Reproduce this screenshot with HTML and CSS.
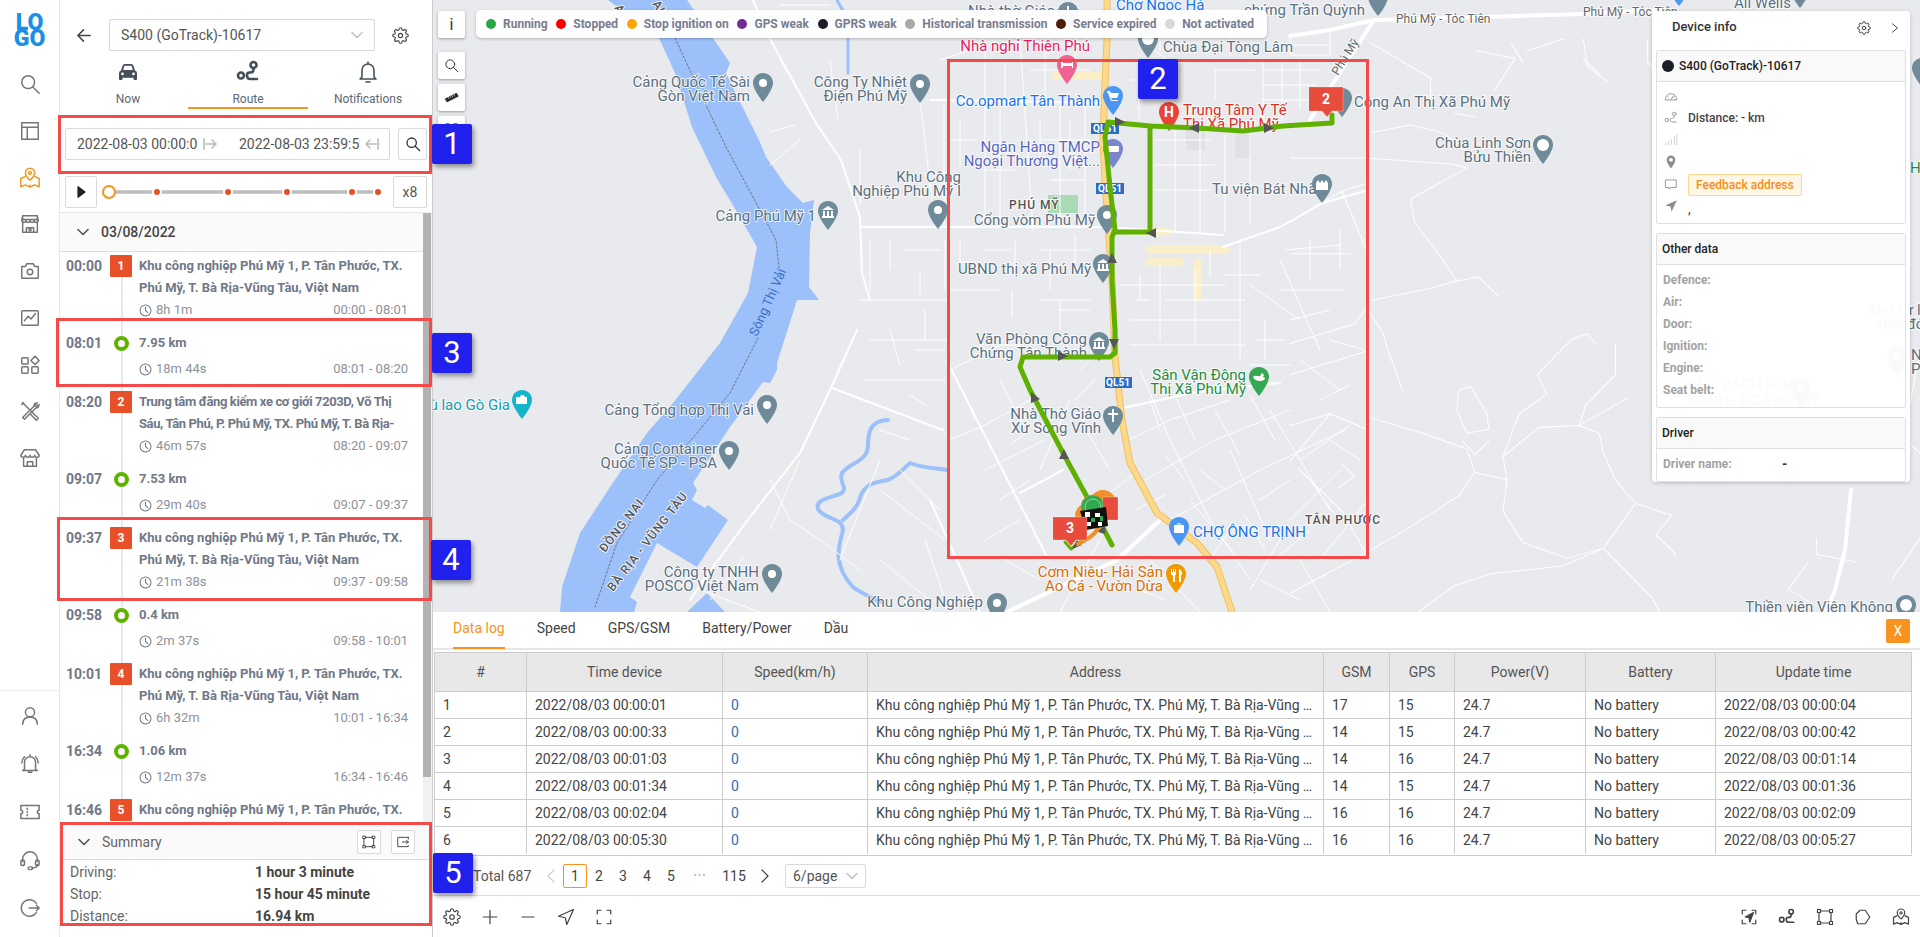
FILE: index.html
```html
<!DOCTYPE html>
<html lang="en">
<head>
    <meta charset="UTF-8">
    <title>Route</title>
    <link rel="stylesheet" href="styles.css">
</head>
<body>
    <svg class="defs">
        <symbol id="i-gear" viewBox="0 0 24 24"><circle cx="12" cy="12" r="3"/><path d="M19.4 15a1.65 1.65 0 0 0 .33 1.82l.06.06a2 2 0 0 1 0 2.83 2 2 0 0 1-2.83 0l-.06-.06a1.65 1.65 0 0 0-1.82-.33 1.65 1.65 0 0 0-1 1.51V21a2 2 0 0 1-2 2 2 2 0 0 1-2-2v-.09A1.65 1.65 0 0 0 9 19.4a1.65 1.65 0 0 0-1.82.33l-.06.06a2 2 0 0 1-2.83 0 2 2 0 0 1 0-2.83l.06-.06a1.65 1.65 0 0 0 .33-1.82 1.65 1.65 0 0 0-1.51-1H3a2 2 0 0 1-2-2 2 2 0 0 1 2-2h.09A1.65 1.65 0 0 0 4.6 9a1.65 1.65 0 0 0-.33-1.82l-.06-.06a2 2 0 0 1 0-2.83 2 2 0 0 1 2.83 0l.06.06a1.65 1.65 0 0 0 1.82.33H9a1.65 1.65 0 0 0 1-1.51V3a2 2 0 0 1 2-2 2 2 0 0 1 2 2v.09a1.65 1.65 0 0 0 1 1.51 1.65 1.65 0 0 0 1.82-.33l.06-.06a2 2 0 0 1 2.83 0 2 2 0 0 1 0 2.83l-.06.06a1.65 1.65 0 0 0-.33 1.82V9a1.65 1.65 0 0 0 1.51 1H21a2 2 0 0 1 2 2 2 2 0 0 1-2 2h-.09a1.65 1.65 0 0 0-1.51 1z"/></symbol>
        <symbol id="i-route" viewBox="0 0 24 24"><circle cx="17.5" cy="5" r="3"/><circle cx="5" cy="15.5" r="3"/><path d="M17.5 8v1.5c0 2-1 3-3 3h-1c-2 0-2.5 1.3-2.5 2.7 0 2 1 3.8 3 3.8h7"/></symbol>
        <symbol id="i-search" viewBox="0 0 24 24"><circle cx="10" cy="10" r="7"/><path d="M15.2 15.2L22 22"/></symbol>
        <symbol id="i-box" viewBox="0 0 24 24"><rect x="4" y="4" width="16" height="16"/><rect x="2" y="2" width="4" height="4" class="solid"/><rect x="18" y="2" width="4" height="4" class="solid"/><rect x="2" y="18" width="4" height="4" class="solid"/><rect x="18" y="18" width="4" height="4" class="solid"/></symbol>
        <symbol id="i-nav" viewBox="0 0 24 24"><path d="M22 2L2 11l9 2 2 9z"/></symbol>
        <symbol id="i-clock" viewBox="0 0 14 14"><circle cx="7" cy="7" r="5.9"/><path d="M7 3.2V7l2.6 2.2"/></symbol>
        <symbol id="i-chev" viewBox="0 0 12 12"><path d="M1 3.5l5 5 5-5"/></symbol>
        <symbol id="i-map" viewBox="0 0 24 24"><path d="M12 14.5s-5-4.500-5-8.200a5 5 0 0 1 10 0c0 3.700-5 8.200-5 8.200z"/><circle cx="12" cy="6.500" r="1.500"/><path d="M6.500 10.500L2 12.500v9l5-2 5 2.500 5-2.500 5 2v-9l-4.500-2M12 21.500v-2"/></symbol>
        <symbol id="pin" viewBox="0 0 20 29"><path d="M10 0C4.500 0 0 4.400 0 9.800c0 7.200 10 19.200 10 19.200s10-12 10-19.200C20 4.400 15.500 0 10 0z"/></symbol>
    </svg>

    <nav class="rail">
        <div class="logo">LO<br>GO</div>
        <div class="rail-top">
            <svg class="rail-icon" viewBox="0 0 24 24"><use href="#i-search"/></svg>
            <svg class="rail-icon" viewBox="0 0 24 24"><path d="M3 3h18v18H3zM3 8h18M9 8v13"/></svg>
            <svg class="rail-icon rail-active" viewBox="0 0 24 24"><use href="#i-map"/></svg>
            <svg class="rail-icon" viewBox="0 0 24 24"><path d="M4 3h16v18H4zM4 7h16M3 8l1-5M21 8l-1-5M3 8c0 3 4.500 3 4.500 0 0 3 4.500 3 4.500 0 0 3 4.500 3 4.500 0 0 3 4.500 3 4.500 0M8 21v-5h8v5M11 16v3h2v-3"/></svg>
            <svg class="rail-icon" viewBox="0 0 24 24"><path d="M3 7h4l1.500-3h7L17 7h4v13H3z"/><circle cx="12" cy="13" r="3"/></svg>
            <svg class="rail-icon" viewBox="0 0 24 24"><rect x="3" y="4" width="18" height="16" rx="1"/><path d="M6 15l4-5 3 3 5-6"/></svg>
            <svg class="rail-icon" viewBox="0 0 24 24"><rect x="3" y="4" width="7" height="7" rx="1"/><rect x="3" y="14" width="7" height="7" rx="1"/><rect x="14" y="14" width="7" height="7" rx="1"/><path d="M17.500 2.500l4.500 4.500-4.500 4.500L13 7z"/></svg>
            <svg class="rail-icon" viewBox="0 0 24 24"><path d="M4 3l9 9 M3 5l2-2M14 13l7 7-2 2-7-7zM20 3l-3 1-1 3-12 12 2 2 12-12 3-1 1-3-3 2-2-1z"/></svg>
            <svg class="rail-icon" viewBox="0 0 24 24"><path d="M6 3h12l4 6c0 3-5 3-5 0 0 3-5 3-5 0 0 3-5 3-5 0 0 3-5 3-5 0zM5 12v9h4v-5h6v5h4v-9M9 21h6"/></svg>
        </div>
        <div class="rail-bottom">
            <svg class="rail-icon" viewBox="0 0 24 24"><circle cx="12" cy="8" r="5"/><path d="M4 21c0-5 3-8 8-8s8 3 8 8"/></svg>
            <svg class="rail-icon" viewBox="0 0 24 24"><path d="M6 18V10a6 6 0 0 1 12 0v8l2 1H4zM10 21h4M12 2v2M3 11c0-3 1-5 3-7M21 11c0-3-1-5-3-7"/></svg>
            <svg class="rail-icon" viewBox="0 0 24 24"><path d="M2 5h20v5a2 2 0 0 0 0 4v5H2v-5a2 2 0 0 0 0-4zM9 8v1M9 11.500v1M9 15v1"/></svg>
            <svg class="rail-icon" viewBox="0 0 24 24"><path d="M4 14v-3a8 8 0 0 1 16 0v3M20 17c0 3-3 4-6 4"/><rect x="2" y="12" width="4" height="6" rx="2"/><rect x="18" y="12" width="4" height="6" rx="2"/><rect x="10" y="19.500" width="5" height="3" rx="1.500"/></svg>
            <svg class="rail-icon" viewBox="0 0 24 24"><path d="M19 7a9 9 0 1 0 0 10M11 12h11M19 9l3 3-3 3"/></svg>
        </div>
    </nav>

    <aside class="panel">
        <div class="device-row">
            <svg class="ico-back" viewBox="0 0 16 16"><path d="M15 8H2M8 2L2 8l6 6"/></svg>
            <div class="device-select">
                <span>S400 (GoTrack)-10617</span>
                <svg class="chev chev-light" viewBox="0 0 12 12"><use href="#i-chev"/></svg>
            </div>
            <svg class="ico-gear" viewBox="0 0 24 24"><use href="#i-gear"/></svg>
        </div>
        <div class="tabs">
            <div class="tab">
                <svg class="tab-icon solid-icon" viewBox="0 0 24 24"><path fill-rule="evenodd" d="M5 10.500l1.500-4.700A2.500 2.500 0 0 1 8.900 4h6.200a2.500 2.500 0 0 1 2.400 1.800l1.500 4.700c1.200.4 2 1.400 2 2.700V19a1 1 0 0 1-1 1h-1.500a1 1 0 0 1-1-1v-1.200H6.500V19a1 1 0 0 1-1 1H4a1 1 0 0 1-1-1v-5.800c0-1.300.8-2.300 2-2.700zM7.200 10h9.600l-1-3.500a1 1 0 0 0-1-.7H9.200a1 1 0 0 0-1 .7zM6.500 12.500a1.400 1.400 0 1 0 0 2.800 1.400 1.400 0 0 0 0-2.800zM17.500 12.500a1.400 1.400 0 1 0 0 2.800 1.400 1.400 0 0 0 0-2.800z"/></svg>
                <span>Now</span>
            </div>
            <div class="tab tab-active">
                <svg class="tab-icon tab-heavy" viewBox="0 0 24 24"><use href="#i-route"/></svg>
                <span>Route</span>
            </div>
            <div class="tab">
                <svg class="tab-icon tab-thin" viewBox="0 0 24 24"><path d="M6 17V10a6 6 0 0 1 12 0v7l2 2H4zM10 22h4M12 2v2"/></svg>
                <span>Notifications</span>
            </div>
        </div>

        <div class="date-row">
            <div class="date-range">
                <div class="date-part">
                    <span class="date-text">2022-08-03 00:00:00</span>
                    <svg class="date-arrow" viewBox="0 0 14 12"><path d="M1 1v10M3 6h10M9 2l4 4-4 4"/></svg>
                </div>
                <div class="date-part">
                    <span class="date-text">2022-08-03 23:59:59</span>
                    <svg class="date-arrow" viewBox="0 0 14 12"><path d="M13 1v10M11 6H1M5 2L1 6l4 4"/></svg>
                </div>
            </div>
            <div class="square-btn search-btn"><svg viewBox="0 0 24 24"><use href="#i-search"/></svg></div>
        </div>

        <div class="play-row">
            <div class="square-btn play-btn"><svg viewBox="0 0 10 14"><path d="M1 1l8 6-8 6z"/></svg></div>
            <svg class="slider" viewBox="0 0 288 18">
                <line x1="8" y1="9" x2="280" y2="9" stroke="#bdbdbd" stroke-width="3.500"/>
                <circle cx="56" cy="9" r="4" fill="#e8502a" stroke="#fff" stroke-width="2"/>
                <circle cx="127" cy="9" r="4" fill="#e8502a" stroke="#fff" stroke-width="2"/>
                <circle cx="186" cy="9" r="4" fill="#e8502a" stroke="#fff" stroke-width="2"/>
                <circle cx="251" cy="9" r="4" fill="#e8502a" stroke="#fff" stroke-width="2"/>
                <circle cx="277" cy="9" r="4" fill="#e8502a" stroke="#fff" stroke-width="2"/>
                <circle cx="8" cy="9" r="6" fill="#fff" stroke="#f7931e" stroke-width="2"/>
            </svg>
            <div class="square-btn speed-btn">x8</div>
        </div>

        <div class="stops">
            <div class="scroll-thumb"></div>
            <div class="stops-head">
                <svg class="chev" viewBox="0 0 12 12"><use href="#i-chev"/></svg>
                <b>03/08/2022</b>
            </div>

            <div class="stop">
                <div class="stop-time">00:00</div>
                <div class="stop-mark"><span class="badge">1</span></div>
                <div class="stop-body">
                    <div class="stop-addr">Khu công nghiệp Phú Mỹ 1, P. Tân Phước, TX.<br>Phú Mỹ, T. Bà Rịa-Vũng Tàu, Việt Nam</div>
                    <div class="stop-meta"><span><svg class="clock" viewBox="0 0 14 14"><use href="#i-clock"/></svg>8h 1m</span><span>00:00 - 08:01</span></div>
                </div>
            </div>
            <div class="stop stop-short">
                <div class="stop-time">08:01</div>
                <div class="stop-mark"><span class="ring"></span></div>
                <div class="stop-body">
                    <div class="stop-addr">7.95 km</div>
                    <div class="stop-meta"><span><svg class="clock" viewBox="0 0 14 14"><use href="#i-clock"/></svg>18m 44s</span><span>08:01 - 08:20</span></div>
                </div>
            </div>
            <div class="stop">
                <div class="stop-time">08:20</div>
                <div class="stop-mark"><span class="badge">2</span></div>
                <div class="stop-body">
                    <div class="stop-addr stop-addr-tight">Trung tâm đăng kiểm xe cơ giới 7203D, Võ Thị<br>Sáu, Tân Phú, P. Phú Mỹ, TX. Phú Mỹ, T. Bà Rịa-</div>
                    <div class="stop-meta"><span><svg class="clock" viewBox="0 0 14 14"><use href="#i-clock"/></svg>46m 57s</span><span>08:20 - 09:07</span></div>
                </div>
            </div>
            <div class="stop stop-short">
                <div class="stop-time">09:07</div>
                <div class="stop-mark"><span class="ring"></span></div>
                <div class="stop-body">
                    <div class="stop-addr">7.53 km</div>
                    <div class="stop-meta"><span><svg class="clock" viewBox="0 0 14 14"><use href="#i-clock"/></svg>29m 40s</span><span>09:07 - 09:37</span></div>
                </div>
            </div>
            <div class="stop">
                <div class="stop-time">09:37</div>
                <div class="stop-mark"><span class="badge">3</span></div>
                <div class="stop-body">
                    <div class="stop-addr">Khu công nghiệp Phú Mỹ 1, P. Tân Phước, TX.<br>Phú Mỹ, T. Bà Rịa-Vũng Tàu, Việt Nam</div>
                    <div class="stop-meta"><span><svg class="clock" viewBox="0 0 14 14"><use href="#i-clock"/></svg>21m 38s</span><span>09:37 - 09:58</span></div>
                </div>
            </div>
            <div class="stop stop-short">
                <div class="stop-time">09:58</div>
                <div class="stop-mark"><span class="ring"></span></div>
                <div class="stop-body">
                    <div class="stop-addr">0.4 km</div>
                    <div class="stop-meta"><span><svg class="clock" viewBox="0 0 14 14"><use href="#i-clock"/></svg>2m 37s</span><span>09:58 - 10:01</span></div>
                </div>
            </div>
            <div class="stop">
                <div class="stop-time">10:01</div>
                <div class="stop-mark"><span class="badge">4</span></div>
                <div class="stop-body">
                    <div class="stop-addr">Khu công nghiệp Phú Mỹ 1, P. Tân Phước, TX.<br>Phú Mỹ, T. Bà Rịa-Vũng Tàu, Việt Nam</div>
                    <div class="stop-meta"><span><svg class="clock" viewBox="0 0 14 14"><use href="#i-clock"/></svg>6h 32m</span><span>10:01 - 16:34</span></div>
                </div>
            </div>
            <div class="stop stop-short">
                <div class="stop-time">16:34</div>
                <div class="stop-mark"><span class="ring"></span></div>
                <div class="stop-body">
                    <div class="stop-addr">1.06 km</div>
                    <div class="stop-meta"><span><svg class="clock" viewBox="0 0 14 14"><use href="#i-clock"/></svg>12m 37s</span><span>16:34 - 16:46</span></div>
                </div>
            </div>
            <div class="stop stop-last">
                <div class="stop-time">16:46</div>
                <div class="stop-mark"><span class="badge">5</span></div>
                <div class="stop-body">
                    <div class="stop-addr">Khu công nghiệp Phú Mỹ 1, P. Tân Phước, TX.</div>
                </div>
            </div>
        </div>

        <div class="summary">
            <div class="summary-head">
                <svg class="chev" viewBox="0 0 12 12"><use href="#i-chev"/></svg>
                <span class="summary-title">Summary</span>
                <div class="square-btn small-btn"><svg viewBox="0 0 24 24"><use href="#i-box"/></svg></div>
                <div class="square-btn small-btn"><svg viewBox="0 0 24 24"><path d="M21 4H3v16h18v-2M21 4v3M11 12h11M18 9l3 3-3 3"/></svg></div>
            </div>
            <div class="summary-row"><span>Driving:</span><b>1 hour 3 minute</b></div>
            <div class="summary-row"><span>Stop:</span><b>15 hour 45 minute</b></div>
            <div class="summary-row"><span>Distance:</span><b>16.94 km</b></div>
        </div>
    </aside>

    <main class="main">
        <section class="map">
            <svg class="map-canvas" viewBox="433 0 1487 612">
                <!-- yellow blocks -->
                <g class="blocks">
                    <path d="M1055 76H1100M1132 232H1168M1150 250H1226M1198 262V298M1150 262H1180"/>
                </g>
                <rect x="1048" y="195" width="30" height="18" fill="#a8dab5"/>
                <rect x="1186" y="130" width="19" height="20" fill="#dfe1e5"/>
                <rect x="1235" y="130" width="16" height="28" fill="#dfe1e5"/>

                <!-- river -->
                <path class="water" d="M608 0L659 38 675 73 692 127 716 177 734 207 757 247 748 293 720 343 673 403 647 433 610 487 580 533 562 587 560 612H634L637 602 630 597 657 543 697 567 728 520 708 505 705 508 692 500 697 490 693 483 730 427 763 382 770 383 777 370 777 363 797 300 817 300 819 300 809 287 810 233 814 200 803 203 787 187 766 157 759 140 744 110 726 73 730 63 687 0z"/>
                <path class="water" d="M687 612L707 593 725 612z"/>
                <path class="creek" d="M888 420C872 420 868 430 868 445 868 462 850 462 842 473 838 484 850 488 840 494 828 498 815 500 818 509 824 520 843 517 843 530 838 548 833 565 853 587 862 594 872 597 880 602"/>
                <path class="creek" d="M843 520C852 512 858 506 860 498 864 484 875 482 888 480 898 476 904 468 910 463 922 468 935 468 947 470"/>
                <path class="creek creek-thin" d="M837 0L848 20V73"/>
                <path class="border-line" d="M675 38L705 103 726 147 753 197 776 240 780 277M758 338L730 393 697 433 657 480 617 543 595 607"/>

                <!-- roads -->
                <g class="road-big">
                    <path d="M1160 520L1117 560 1007 612"/>
                    <path d="M1330 30L1374 20 1583 14 1660 10M1374 20L1330 88 1310 120M1290 36L1330 30"/>
                    <path d="M1851 490L1845 550 1835 590 1826 612"/>
                </g>
                <g class="road-mid">
                    <path d="M753 0L769 37 816 123 841 160 860 217 862 273 870 300M860 227H1105L1223 235"/>
                    <path d="M857 330L830 390 800 453 750 517 713 567 690 600"/>
                    <path d="M832 388L943 430M950 367L1047 557M930 500L980 612"/>
                    <path d="M930 100L1103 103M1123 408L1197 392 1280 383M1020 493L1063 470"/>
                    <path d="M1223 247L1280 227 1323 203 1368 190"/>
                </g>
                <g class="road-min">
                    <path d="M780 5L830 5M780 60L815 120M800 140L770 165M830 60L838 120M795 125L770 132M860 205V150M920 100L935 225M985 45L985 225M944 105V225M1020 40L1033 230M1000 110V225M1060 105V228M1085 105V225"/>
                    <path d="M1139 60V120M1155 140H1210M1155 165H1215M1155 190H1210M1175 130V232M1200 132V235M1250 132V225M1225 135V232M1263 60V123M1282 60V123M1300 60V110M1263 70H1320M1263 85H1315M1263 100H1310M1290 36V55H1330V33M1290 45H1330"/>
                    <path d="M1120 285H1225M1160 265V340M1195 270V345M1240 240V360M1130 320H1240M1130 345H1245M1165 300H1245M1250 285L1300 320M1280 260L1320 350"/>
                    <path d="M1128 440L1170 420 1230 400M1145 480L1215 440 1290 410M1170 520L1260 470 1345 430M1230 450L1270 540 M1270 410L1330 510M1300 460L1350 425M1190 500L1240 560M1140 370L1170 440 1210 520 1250 580M1290 520L1340 470M1320 560L1368 500"/>
                    <path d="M950 370L1000 345 1020 345M985 425L1030 400M985 470L1045 440M950 440L985 425M1080 370L1100 350M1080 420L1110 470M1100 500L1140 470M1070 400L1040 470"/>
                    <path d="M870 340H950M865 380H945M860 300H950M900 470L940 510M925 540L945 600M880 560L930 600"/>
                    <path d="M790 520L820 540 860 570M770 480L790 520M770 530L800 460M700 590L760 612M745 555L710 600M880 460L840 560M880 490L945 540"/>
                    <path d="M1100 540L1060 612M1150 560L1200 612M1250 590L1280 540M1300 560L1330 612M1210 560L1230 530M1050 590L1100 570"/>
                    <!-- short side streets -->
                    <path d="M960 240V262H975M985 250H1010M1015 240V275M1040 250H1090M1050 250V290M1075 235V262M950 290H1000M1012 290V318M1040 300H1090M1060 300V330M1090 310H1060M950 140H975M960 120V165M985 170H1015M1040 120V165M1040 140H1090M1070 120V170M1085 180H1050M940 60L985 45M1005 60V100M1030 70H1090M1045 45V100M1075 20V60M1020 20H1100"/>
                    <path d="M1140 10H1250M1160 10V50M1200 0V40M1230 20V55M1140 40L1175 65M1215 70H1255M1215 70V100M1130 80H1180M1175 60V95"/>
                    <path d="M1135 300H1150M1140 275V300M1210 250V275M1225 275H1260M1280 290H1345M1310 240V280M1340 230V270M1290 320L1330 310M1255 340H1285M1265 320V360M1285 250L1340 245M1300 360L1340 390M1330 340L1365 350M1250 365H1290"/>
                    <path d="M1150 400L1160 430M1175 395L1195 440M1215 410L1240 455M1250 395L1275 440M1165 455L1185 480M1200 470L1225 490M1260 500L1290 480M1245 515L1265 550M1280 555L1310 530M1310 480L1335 515M1135 510L1165 495M1320 400L1350 385M1330 440L1360 460"/>
                    <path d="M1000 380L1015 410M1030 430L1010 445M965 395L975 420M1000 500L1030 480M985 540L1020 520M1040 580L1005 560M1080 510L1060 530M1095 380L1075 400M1140 590L1165 600M1260 580L1300 600"/>
                    <path d="M870 240V290M890 240V270M905 250H940M920 270V295M945 240V290M880 430L910 440M890 330L900 365M925 310V340M915 350H945M910 395L925 405"/>
                </g>
                <g class="road-min road-far" transform="translate(1290 0) scale(0.4018 0.3903)">
                    <path d="M0 405L190 405 400 420 440 430 300 510 310 570 370 650 415 720 470 710 520 760M200 770L345 740 415 720M190 790L230 850 245 900 280 1000M200 1070L330 1110 440 1150 460 1210 540 1230 530 1170 620 1095 720 1090 770 1110 780 1160 810 1230 860 1290 950 1320 910 1370 960 1420"/>
                    <path d="M720 1090L735 1040 810 960 810 880M720 1090L840 1020M530 1170L570 1060 640 1010 615 960 700 870 740 855 760 880M460 1210L420 1270 300 1350 200 1410 0 1520M540 1230L530 1310 580 1390 690 1430 780 1405 900 1530 920 1568M780 1405L860 1290M780 1405L680 1450 500 1470 410 1500 320 1568"/>
                    <path d="M420 1000L450 990 490 1060 495 1100 440 1110 415 1050 420 1000M495 1130L460 1165 430 1130M1290 1440L1240 1510 1290 1540M1310 1380V1420L1410 1440M1500 1480L1568 1380M465 130L560 150 510 230M550 110L580 160M590 130L680 100M730 100L740 170 790 210M730 150L770 190M200 110L350 200V270M410 290L460 300M890 100V160L900 170M200 340L300 320 380 340 420 370"/>
                    <path d="M0 570L60 530 130 490 190 470M130 490L190 640M0 650H150M0 880L160 830 190 790M0 960L190 900M0 1090L100 1060 190 1100M0 1180L100 1060M20 1200L130 1310 190 1420M120 1250L160 1220 130 1190M1500 1100L1568 1160M1568 900L1540 1050"/>
                </g>

                <!-- yellow highway -->
                <path class="hw-edge" d="M1107 0V40L1105 83 1103 140 1105 180 1112 280 1115 357 1122 420 1130 463 1157 513 1197 543 1217 567 1232 612"/>
                <path class="hw" d="M1107 0V40L1105 83 1103 140 1105 180 1112 280 1115 357 1122 420 1130 463 1157 513 1197 543 1217 567 1232 612"/>
                <g class="shield">
                    <rect x="1091" y="123" width="28" height="11"/><text x="1105" y="132">QL51</text>
                    <rect x="1096" y="183" width="28" height="11"/><text x="1110" y="192">QL51</text>
                    <rect x="1105" y="377" width="27" height="11"/><text x="1118" y="386">QL51</text>
                </g>

                <!-- place labels -->
                <g class="lbl">
                    <text x="750" y="87" class="end">Cảng Quốc Tế Sài</text>
                    <text x="750" y="101" class="end">Gòn Việt Nam</text>
                    <text x="907" y="87" class="end">Công Ty Nhiệt</text>
                    <text x="907" y="101" class="end">Điện Phú Mỹ</text>
                    <text x="816" y="221" class="end">Cảng Phú Mỹ 1</text>
                    <text x="961" y="182" class="end">Khu Công</text>
                    <text x="961" y="196" class="end">Nghiệp Phú Mỹ I</text>
                    <text x="754" y="415" class="end">Cảng Tổng hợp Thị Vải</text>
                    <text x="717" y="454" class="end">Cảng Container</text>
                    <text x="717" y="468" class="end">Quốc Tế SP - PSA</text>
                    <text x="759" y="577" class="end">Công ty TNHH</text>
                    <text x="759" y="591" class="end">POSCO Việt Nam</text>
                    <text x="983" y="607" class="end">Khu Công Nghiệp</text>
                    <text x="1055" y="16" class="end">Nhà thờ Giáo</text>
                    <text x="1163" y="52">Chùa Đại Tòng Lâm</text>
                    <text x="1365" y="15" class="end">chứng Trần Quỳnh</text>
                    <text x="1354" y="107">Công An Thị Xã Phú Mỹ</text>
                    <text x="1531" y="148" class="end">Chùa Linh Sơn</text>
                    <text x="1531" y="162" class="end">Bửu Thiền</text>
                    <text x="1212" y="194">Tu viện Bát Nhã</text>
                    <text x="1095" y="225" class="end">Cổng vòm Phú Mỹ</text>
                    <text x="1091" y="274" class="end">UBND thị xã Phú Mỹ</text>
                    <text x="1087" y="344" class="end">Văn Phòng Công</text>
                    <text x="1087" y="358" class="end">Chứng Tân Thành</text>
                    <text x="1101" y="419" class="end">Nhà Thờ Giáo</text>
                    <text x="1101" y="433" class="end">Xứ Sông Vĩnh</text>
                    <text x="1893" y="612" class="end">Thiền viện Viên Không</text>
                    <text x="1734" y="8">Ali Wells</text>
                    <text x="1867" y="315">Khu xử lý</text>
                    <text x="1878" y="329">thải đóc</text>
                    <text x="1911" y="360">N</text>
                    <text x="1911" y="374">P</text>
                    <text x="1688" y="390">KHO BÁCH HÓA</text>
                    <text x="1688" y="405">XANH - ĐC PHÚ MỸ</text>
                </g>
                <g class="lbl lbl-road">
                    <text x="1396" y="23">Phú Mỹ - Tóc Tiên</text>
                    <text x="1583" y="16">Phú Mỹ - Tóc Tiên</text>
                    <text transform="translate(1338 76) rotate(-58)">Phú Mỹ</text>
                </g>
                <g class="lbl lbl-area">
                    <text x="1009" y="209">PHÚ MỸ</text>
                    <text x="1305" y="524">TÂN PHƯỚC</text>
                    <text transform="translate(605 553) rotate(-52)">ĐỒNG NAI</text>
                    <text transform="translate(613 592) rotate(-52)">BÀ RỊA - VŨNG TÀU</text>
                    <text transform="translate(614 8) rotate(55)">AI</text>
                    <text transform="translate(652 4) rotate(55)">AU</text>
                </g>
                <g class="lbl lbl-water">
                    <text transform="translate(757 337) rotate(-66)">Sông Thị Vải</text>
                </g>
                <g class="lbl lbl-teal"><text x="510" y="410" class="end">Khu du lịch cù lao Gò Gia</text></g>
                <g class="lbl lbl-pink"><text x="1090" y="51" class="end">Nhà nghỉ Thiên Phú</text></g>
                <g class="lbl lbl-blue">
                    <text x="1100" y="106" class="end">Co.opmart Tân Thành</text>
                    <text x="1193" y="537">CHỢ ÔNG TRỊNH</text>
                    <text x="1116" y="10">Chợ Ngọc Hà</text>
                </g>
                <g class="lbl lbl-red">
                    <text x="1183" y="115">Trung Tâm Y Tế</text>
                    <text x="1183" y="129">Thị Xã Phú Mỹ</text>
                </g>
                <g class="lbl lbl-indigo">
                    <text x="1100" y="152" class="end">Ngân Hàng TMCP</text>
                    <text x="1100" y="166" class="end">Ngoại Thương Việt...</text>
                </g>
                <g class="lbl lbl-green">
                    <text x="1246" y="380" class="end">Sân Vận Động</text>
                    <text x="1246" y="394" class="end">Thị Xã Phú Mỹ</text>
                    <text x="1910" y="173">Hồ</text>
                </g>
                <g class="lbl lbl-orange">
                    <text x="1163" y="577" class="end">Cơm Niêu- Hải Sản</text>
                    <text x="1163" y="591" class="end">Ao Cá - Vườn Dừa</text>
                </g>

                <!-- pins -->
                <g class="pins" fill="#6f8a99">
                    <use href="#pin" x="753" y="73" width="20" height="29"/><circle cx="763" cy="83" r="4"/>
                    <use href="#pin" x="910" y="74" width="20" height="29"/><circle cx="920" cy="84" r="4"/>
                    <use href="#pin" x="818" y="201" width="20" height="29"/><path d="M822 210l6-4 6 4zM823 211h2v5h-2zM827 211h2v5h-2zM831 211h2v5h-2zM822 216h12v2h-12z"/>
                    <use href="#pin" x="928" y="200" width="20" height="29"/><circle cx="938" cy="210" r="4"/>
                    <use href="#pin" x="757" y="395" width="20" height="29"/><circle cx="767" cy="405" r="4"/>
                    <use href="#pin" x="719" y="441" width="20" height="29"/><circle cx="729" cy="451" r="4"/>
                    <use href="#pin" x="762" y="564" width="20" height="29"/><circle cx="772" cy="574" r="4"/>
                    <use href="#pin" x="987" y="593" width="20" height="29"/><circle cx="997" cy="603" r="4"/>
                    <use href="#pin" x="1058" y="2" width="20" height="29"/><path d="M1067 6h2v4h4v2h-4v7h-2v-7h-4v-2h4z"/>
                    <use href="#pin" x="1138" y="29" width="20" height="29"/><circle cx="1148" cy="39" r="6"/>
                    <use href="#pin" x="1368" y="-13" width="20" height="29"/>
                    <use href="#pin" x="1332" y="88" width="20" height="29"/>
                    <use href="#pin" x="1533" y="135" width="20" height="29"/><circle cx="1543" cy="145" r="6"/>
                    <use href="#pin" x="1312" y="174" width="20" height="29"/><path d="M1316 190v-7l2-3 2 3v7zM1320 190v-7l2-3 2 3v7zM1324 190v-7l2-3 2 3v7z"/>
                    <use href="#pin" x="1097" y="205" width="20" height="29"/><circle cx="1107" cy="215" r="4"/>
                    <use href="#pin" x="1093" y="254" width="20" height="29"/><path d="M1097 263l6-4 6 4zM1098 264h2v5h-2zM1102 264h2v5h-2zM1106 264h2v5h-2zM1097 269h12v2h-12z"/>
                    <use href="#pin" x="1089" y="332" width="20" height="29"/><path d="M1093 341l6-4 6 4zM1094 342h2v5h-2zM1098 342h2v5h-2zM1102 342h2v5h-2zM1093 347h12v2h-12z"/>
                    <use href="#pin" x="1103" y="406" width="20" height="29"/><path d="M1112 409h2v4h4v2h-4v7h-2v-7h-4v-2h4z"/>
                    <use href="#pin" x="1790" y="-21" width="20" height="29"/>
                    <use href="#pin" x="1896" y="595" width="20" height="29"/><circle cx="1906" cy="605" r="6"/>
                    <use href="#pin" x="1791" y="378" width="20" height="29"/><circle cx="1801" cy="388" r="4"/>
                    <use href="#pin" x="1887" y="346" width="20" height="29"/><circle cx="1897" cy="356" r="4"/>
                    <use href="#pin" x="1912" y="58" width="20" height="29"/>
                </g>
                <g class="pins" fill="#12b5cb"><use href="#pin" x="512" y="390" width="20" height="29"/><path d="M516 397h4l1-2h3l1 2h2v7h-11z"/></g>
                <g class="pins" fill="#f06292"><use href="#pin" x="1057" y="55" width="20" height="29"/><path d="M1061 60h2v3h9v-1h1v6h-1v-2h-9v2h-2z"/></g>
                <g class="pins" fill="#4b96f3">
                    <use href="#pin" x="1103" y="86" width="20" height="29"/><path d="M1107 91h3l1 2h8l-2 5h-6l1 2h6v1h-7l-3-8h-1z"/>
                    <use href="#pin" x="1169" y="517" width="20" height="29"/><path d="M1174 525h10v8h-10zM1177 525a2 2 0 0 1 4 0h-1a1 1 0 0 0-2 0z"/>
                    <use href="#pin" x="1669" y="-23" width="20" height="29"/>
                </g>
                <g class="pins" fill="#ea4335"><use href="#pin" x="1159" y="102" width="20" height="29"/></g>
                <text class="pin-letter" x="1169" y="117">H</text>
                <g class="pins" fill="#7986cb"><use href="#pin" x="1103" y="139" width="20" height="29"/><rect x="1107" y="146" width="12" height="6" rx="1"/></g>
                <g class="pins" fill="#34a853"><use href="#pin" x="1249" y="367" width="20" height="29"/><path d="M1253 377c2-3 4 0 7-1l2-3 2 2-1 2 2 1c0 2-2 3-5 3-4 0-6-2-7-4z"/></g>
                <g class="pins" fill="#f29900"><use href="#pin" x="1166" y="564" width="20" height="29"/><path d="M1171 569h1v3h1v-3h1v3h1v-3h1v6h-1v7h-2v-7h-2zM1179 569c2 0 3 3 3 6h-1v7h-2z"/></g>

                <!-- trip line -->
                <path class="trip" d="M1332 115V123L1283 126 1243 131 1197 128 1150 126 1108 122 1105 137 1110 187 1115 230 1112 237V280L1115 330V353L1110 357H1023L1020 367 1030 390 1063 453 1087 497 1112 545"/>
                <path class="trip" d="M1150 126V232H1115"/>
                <path class="trip-thin" d="M1065 542L1071 549 1085 538"/>
                <g fill="#555">
                    <path d="M1125 122l-10-5v10z"/>
                    <path d="M1189 128l10-5v10z"/>
                    <path d="M1274 128l-10-5v10z"/>
                    <path d="M1146 233l10-5v10z"/>
                    <path d="M1112 253l-5 10h10z"/>
                    <path d="M1114 349l-5-10h10z"/>
                    <path d="M1068 356l-10-5v10z"/>
                    <path d="M1031 392l0 11 9-4z"/>
                    <path d="M1064 449l-5 10h10z"/>
                    <path d="M1072 549l5-9 5 5z"/>
                    <path d="M1095 531l10-4v7z"/>
                </g>

                <!-- vehicle and stop markers -->
                <circle cx="1103" cy="503" r="13" fill="#f0902a"/>
                <circle cx="1088" cy="516" r="13" fill="#f0902a"/>
                <circle cx="1093" cy="507" r="12" fill="#2fa84f" stroke="#ee8a20" stroke-width="1"/>
                <circle cx="1093" cy="507" r="8" fill="none" stroke="#8fd3a0" stroke-width="1"/>
                <path d="M1098 520c5 10-8 18-20 24" fill="none" stroke="#f0902a" stroke-width="4"/>
                <path class="marker" d="M1103 497h15v23h-15z"/>
                <g>
                    <path d="M1080 511l26-4 2 19-22 4z" fill="#111"/>
                    <path d="M1085 512h5v5h-5zM1095 513h5v4h-5zM1087 522h4v4h-4zM1098 522h4v4h-4z" fill="#fff"/>
                    <path d="M1091 518h4v4h-4zM1100 516h3v5h-3z" fill="#2fa84f"/>
                </g>
                <path class="marker" d="M1053 517h34v23h-11l-5 6-5-6h-13z"/>
                <text class="marker-text" x="1070" y="533">3</text>
                <path class="marker" d="M1309 87h34v24h-11l-5 6-5-6h-13z"/>
                <text class="marker-text" x="1326" y="104">2</text>
            </svg>

            <div class="map-tools">
                <div class="map-btn map-btn-info">i</div>
                <div class="map-btn"><svg viewBox="0 0 24 24"><use href="#i-search"/></svg></div>
                <div class="map-btn"><svg class="ruler" viewBox="0 0 24 24"><path d="M2 14L20 5l3 5-18 9z"/><path class="ruler-ticks" d="M7 12l1 2M10 10.500l1 2M13 9l1 2M16 7.500l1 2"/></svg></div>
                <div class="map-btn"><svg viewBox="0 0 24 24"><path d="M3 8V3h5M16 3h5v5M21 16v5h-5M8 21H3v-5"/></svg></div>
            </div>

            <div class="legend">
                <span class="legend-item"><i class="dot dot-run"></i>Running</span>
                <span class="legend-item"><i class="dot dot-stop"></i>Stopped</span>
                <span class="legend-item"><i class="dot dot-idle"></i>Stop ignition on</span>
                <span class="legend-item"><i class="dot dot-gps"></i>GPS weak</span>
                <span class="legend-item"><i class="dot dot-gprs"></i>GPRS weak</span>
                <span class="legend-item"><i class="dot dot-hist"></i>Historical transmission</span>
                <span class="legend-item"><i class="dot dot-exp"></i>Service expired</span>
                <span class="legend-item"><i class="dot dot-none"></i>Not activated</span>
            </div>

            <div class="info">
                <div class="info-title">
                    <b>Device info</b>
                    <svg class="info-gear" viewBox="0 0 24 24"><use href="#i-gear"/></svg>
                    <svg class="info-close" viewBox="0 0 12 12"><path d="M3 1l6 5-6 5"/></svg>
                </div>
                <div class="card">
                    <div class="card-head"><i class="dot dot-gprs dot-big"></i>S400 (GoTrack)-10617</div>
                    <div class="card-body card-device">
                        <div class="info-row"><svg class="info-ico" viewBox="0 0 24 24"><path d="M2 18a10 10 0 0 1 20 0zM12 18l4-6M6 13l1 1M18 13l-1 1"/></svg></div>
                        <div class="info-row"><svg class="info-ico" viewBox="0 0 24 24"><use href="#i-route"/></svg><b>Distance: - km</b></div>
                        <div class="info-row"><svg class="info-ico info-faint" viewBox="0 0 24 24"><path d="M3 20v-3M8 20v-6M13 20v-9M18 20V6M22 20V3"/></svg></div>
                        <div class="info-row"><svg class="info-ico info-solid" viewBox="0 0 20 29"><path fill-rule="evenodd" d="M10 1C5 1 1 5 1 10c0 7 9 18 9 18s9-11 9-18c0-5-4-9-9-9zm0 5a4 4 0 1 1 0 8 4 4 0 0 1 0-8z"/></svg></div>
                        <div class="info-row"><svg class="info-ico" viewBox="0 0 24 24"><path d="M3 5h18v13h-9l-3 3v-3H3z"/></svg><span class="tag">Feedback address</span></div>
                        <div class="info-row"><svg class="info-ico info-solid" viewBox="0 0 24 24"><path d="M22 2L2 11l9 2 2 9z"/></svg><b class="comma">,</b></div>
                    </div>
                </div>
                <div class="card">
                    <div class="card-head">Other data</div>
                    <div class="card-body">
                        <div class="data-row">Defence:</div>
                        <div class="data-row">Air:</div>
                        <div class="data-row">Door:</div>
                        <div class="data-row">Ignition:</div>
                        <div class="data-row">Engine:</div>
                        <div class="data-row">Seat belt:</div>
                    </div>
                </div>
                <div class="card">
                    <div class="card-head">Driver</div>
                    <div class="card-body">
                        <div class="data-row"><span class="driver-key">Driver name:</span><b class="driver-val">-</b></div>
                    </div>
                </div>
            </div>
        </section>

        <section class="datalog">
            <div class="log-tabs">
                <span class="log-tab log-tab-active">Data log</span>
                <span class="log-tab">Speed</span>
                <span class="log-tab">GPS/GSM</span>
                <span class="log-tab">Battery/Power</span>
                <span class="log-tab">Dầu</span>
                <span class="log-close">X</span>
            </div>
            <div class="table-wrap">
                <table class="log-table">
                    <colgroup>
                        <col class="c-no"><col class="c-time"><col class="c-speed"><col class="c-addr"><col class="c-gsm"><col class="c-gps"><col class="c-power"><col class="c-batt"><col class="c-time">
                    </colgroup>
                    <thead>
                        <tr><th>#</th><th>Time device</th><th>Speed(km/h)</th><th>Address</th><th>GSM</th><th>GPS</th><th>Power(V)</th><th>Battery</th><th>Update time</th></tr>
                    </thead>
                    <tbody>
                        <tr><td>1</td><td>2022/08/03 00:00:01</td><td class="val">0</td><td>Khu công nghiệp Phú Mỹ 1, P. Tân Phước, TX. Phú Mỹ, T. Bà Rịa-Vũng Tàu, Việt Nam</td><td>17</td><td>15</td><td>24.7</td><td>No battery</td><td>2022/08/03 00:00:04</td></tr>
                        <tr><td>2</td><td>2022/08/03 00:00:33</td><td class="val">0</td><td>Khu công nghiệp Phú Mỹ 1, P. Tân Phước, TX. Phú Mỹ, T. Bà Rịa-Vũng Tàu, Việt Nam</td><td>14</td><td>15</td><td>24.7</td><td>No battery</td><td>2022/08/03 00:00:42</td></tr>
                        <tr><td>3</td><td>2022/08/03 00:01:03</td><td class="val">0</td><td>Khu công nghiệp Phú Mỹ 1, P. Tân Phước, TX. Phú Mỹ, T. Bà Rịa-Vũng Tàu, Việt Nam</td><td>14</td><td>16</td><td>24.7</td><td>No battery</td><td>2022/08/03 00:01:14</td></tr>
                        <tr><td>4</td><td>2022/08/03 00:01:34</td><td class="val">0</td><td>Khu công nghiệp Phú Mỹ 1, P. Tân Phước, TX. Phú Mỹ, T. Bà Rịa-Vũng Tàu, Việt Nam</td><td>14</td><td>15</td><td>24.7</td><td>No battery</td><td>2022/08/03 00:01:36</td></tr>
                        <tr><td>5</td><td>2022/08/03 00:02:04</td><td class="val">0</td><td>Khu công nghiệp Phú Mỹ 1, P. Tân Phước, TX. Phú Mỹ, T. Bà Rịa-Vũng Tàu, Việt Nam</td><td>16</td><td>16</td><td>24.7</td><td>No battery</td><td>2022/08/03 00:02:09</td></tr>
                        <tr><td>6</td><td>2022/08/03 00:05:30</td><td class="val">0</td><td>Khu công nghiệp Phú Mỹ 1, P. Tân Phước, TX. Phú Mỹ, T. Bà Rịa-Vũng Tàu, Việt Nam</td><td>16</td><td>16</td><td>24.7</td><td>No battery</td><td>2022/08/03 00:05:27</td></tr>
                    </tbody>
                </table>
            </div>
            <div class="pager">
                <span class="pager-total">Total 687</span>
                <svg class="pager-arrow pager-off" viewBox="0 0 8 14"><path d="M7 1L1 7l6 6"/></svg>
                <span class="page page-on">1</span>
                <span class="page">2</span>
                <span class="page">3</span>
                <span class="page">4</span>
                <span class="page">5</span>
                <span class="page page-more">•••</span>
                <span class="page page-last">115</span>
                <svg class="pager-arrow" viewBox="0 0 8 14"><path d="M1 1l6 6-6 6"/></svg>
                <span class="page-size">6/page<svg class="chev chev-light" viewBox="0 0 12 12"><use href="#i-chev"/></svg></span>
            </div>
        </section>

        <footer class="toolbar">
            <svg class="tool" viewBox="0 0 24 24"><use href="#i-gear"/></svg>
            <svg class="tool" viewBox="0 0 24 24"><path d="M12 3v18M3 12h18"/></svg>
            <svg class="tool" viewBox="0 0 24 24"><path d="M4 12h16"/></svg>
            <svg class="tool" viewBox="0 0 24 24"><use href="#i-nav"/></svg>
            <svg class="tool" viewBox="0 0 24 24"><path d="M3 8V3h5M16 3h5v5M21 16v5h-5M8 21H3v-5"/></svg>
            <span class="tool-gap"></span>
            <svg class="tool" viewBox="0 0 24 24"><path d="M3 8V3h5M16 3h5v5M21 16v5h-5M8 21H3v-5"/><path class="tool-fill" d="M18 6l-11 6 5 1 1 6z"/></svg>
            <svg class="tool tool-heavy" viewBox="0 0 24 24"><use href="#i-route"/></svg>
            <svg class="tool" viewBox="0 0 24 24"><use href="#i-box"/></svg>
            <svg class="tool" viewBox="0 0 24 24"><path d="M8 3h7l6 9-6 9H5l-2-6V8z"/></svg>
            <svg class="tool" viewBox="0 0 24 24"><use href="#i-map"/></svg>
        </footer>
    </main>

    <div class="note note-1"></div>
    <div class="note note-2"></div>
    <div class="note note-3"></div>
    <div class="note note-4"></div>
    <div class="note note-5"></div>
    <div class="num num-1">1</div>
    <div class="num num-2">2</div>
    <div class="num num-3">3</div>
    <div class="num num-4">4</div>
    <div class="num num-5">5</div>
</body>
</html>
```

FILE: styles.css
```css
* {
    box-sizing: border-box;
}
body {
    margin: 0;
    width: 1920px;
    height: 937px;
    display: flex;
    overflow: hidden;
    position: relative;
    font-family: Roboto, "Liberation Sans", sans-serif;
    font-size: 14px;
    color: #444;
    background: #fff;
}
svg {
    display: block;
    fill: none;
    stroke: currentColor;
    stroke-width: 1.6;
    stroke-linecap: round;
    stroke-linejoin: round;
}
.defs {
    position: absolute;
    width: 0;
    height: 0;
}
.solid {
    fill: #fff;
}

/* left icon rail */
.rail {
    width: 60px;
    flex: none;
    display: flex;
    flex-direction: column;
    align-items: center;
    border-right: 1px solid #e8e8e8;
    color: #757575;
}
.logo {
    margin-top: 15px;
    width: 34px;
    height: 32px;
    font-size: 23px;
    line-height: 16px;
    font-weight: 900;
    letter-spacing: 0;
    text-align: center;
    color: #1a8fe3;
}
.rail-top {
    margin-top: 26px;
    display: flex;
    flex-direction: column;
    align-items: center;
    gap: 24.75px;
    flex: 1;
}
.rail-bottom {
    width: 100%;
    height: 247px;
    border-top: 1px solid #eee;
    padding-top: 14px;
    display: flex;
    flex-direction: column;
    align-items: center;
    gap: 26px;
}
.rail-icon {
    width: 22px;
    height: 22px;
}
.rail-active {
    color: #f7931e;
}

/* route panel */
.panel {
    width: 373px;
    flex: none;
    display: flex;
    flex-direction: column;
    border-right: 1px solid #ccc;
}
.device-row {
    height: 55px;
    padding-top: 19px;
    display: flex;
    align-items: flex-start;
}
.ico-back {
    width: 15px;
    height: 15px;
    margin: 9px 0 0 16px;
    color: #444;
}
.device-select {
    width: 266px;
    height: 32px;
    margin-left: 18px;
    padding: 0 11px;
    border: 1px solid #d9d9d9;
    border-radius: 2px;
    display: flex;
    align-items: center;
    justify-content: space-between;
    color: #555;
}
.chev {
    width: 12px;
    height: 12px;
    color: #555;
}
.chev-light {
    color: #c4c4c4;
}
.ico-gear {
    width: 17px;
    height: 17px;
    margin: 8px 0 0 17px;
    color: #444;
}
.tabs {
    height: 54px;
    display: flex;
    padding-left: 8px;
}
.tab {
    width: 120px;
    display: flex;
    flex-direction: column;
    align-items: center;
    color: #5c6874;
    font-size: 12px;
}
.tab-active {
    border-bottom: 2px solid #f7931e;
}
.tab-icon {
    width: 24px;
    height: 24px;
    margin: 5px 0 8px;
    stroke-width: 2;
    color: #454f5b;
}
.tab-heavy {
    stroke-width: 2.600;
}
.tab-thin {
    stroke-width: 1.6;
}
.solid-icon {
    fill: #454f5b;
    stroke: none;
}
.date-row {
    display: flex;
    padding: 19px 5px 0 5px;
    gap: 8px;
}
.date-range {
    width: 325px;
    height: 32px;
    border: 1px solid #d9d9d9;
    border-radius: 2px;
    display: flex;
}
.date-part {
    width: 162px;
    padding: 0 11px;
    display: flex;
    align-items: center;
    gap: 5px;
}
.date-text {
    width: 121px;
    flex: none;
    overflow: hidden;
    white-space: nowrap;
    color: #555;
}
.date-arrow {
    width: 14px;
    height: 12px;
    flex: none;
    color: #bbb;
}
.square-btn {
    border: 1px solid #d9d9d9;
    border-radius: 2px;
    display: flex;
    align-items: center;
    justify-content: center;
    background: #fff;
    flex: none;
}
.search-btn {
    width: 29px;
    height: 32px;
    color: #333;
}
.search-btn svg {
    width: 16px;
    height: 16px;
    stroke-width: 2;
}
.play-row {
    display: flex;
    align-items: center;
    padding: 16px 5px 0 5px;
}
.play-btn {
    width: 32px;
    height: 32px;
}
.play-btn svg {
    width: 9px;
    height: 12px;
    fill: #222;
    color: #222;
}
.slider {
    width: 288px;
    height: 18px;
    margin-left: 4px;
    flex: none;
    stroke: none;
}
.speed-btn {
    width: 34px;
    height: 32px;
    margin-left: 4px;
    color: #555;
}
.stops {
    height: 612px;
    margin-top: 4px;
    position: relative;
    overflow: hidden;
    flex: none;
}
.stops::after {
    content: "";
    position: absolute;
    top: 0;
    right: 0;
    bottom: 0;
    width: 9px;
    background: #f1f1f1;
}
.scroll-thumb {
    position: absolute;
    z-index: 1;
    top: 1px;
    right: 1px;
    width: 8px;
    height: 564px;
    background: #b3b3b3;
}
.stops-head {
    height: 40px;
    padding-left: 17px;
    display: flex;
    align-items: center;
    gap: 12px;
    background: #fafafa;
    border-top: 1px solid #e8e8e8;
    border-bottom: 1px solid #ddd;
    margin-bottom: 3px;
}
.stops-head b {
    font-weight: 500;
    color: #444;
}
.stop {
    height: 77px;
    display: flex;
    position: relative;
}
.stop-short {
    height: 59px;
}
.stop::before {
    content: "";
    position: absolute;
    left: 61px;
    top: 0;
    bottom: 0;
    width: 2px;
    background: #e4e7f5;
}
.stop-time {
    width: 50px;
    padding-left: 6px;
    line-height: 22px;
    font-weight: 700;
    color: #707887;
}
.stop-mark {
    width: 22px;
    height: 22px;
    position: relative;
    display: flex;
    align-items: center;
    justify-content: center;
}
.badge {
    width: 22px;
    height: 22px;
    background: #e8502a;
    border-radius: 1px;
    color: #fff;
    font-size: 12px;
    font-weight: 700;
    line-height: 22px;
    text-align: center;
}
.ring {
    width: 15px;
    height: 15px;
    border: 4px solid #5fb000;
    border-radius: 50%;
    background: #fff;
}
.stop-body {
    width: 269px;
    margin-left: 7px;
}
.stop-addr {
    font-size: 13px;
    font-weight: 700;
    line-height: 22px;
    color: #707887;
    white-space: nowrap;
}
.stop-addr-tight {
    letter-spacing: -.38px;
}
.stop-short .stop-addr {
    margin-bottom: 4px;
}
.stop-meta {
    display: flex;
    justify-content: space-between;
    line-height: 22px;
    font-size: 13px;
    color: #8d929b;
}
.stop-meta span {
    display: flex;
    align-items: center;
    gap: 4px;
}
.clock {
    width: 13px;
    height: 13px;
    stroke-width: 1.1;
    color: #707887;
}
.summary {
    flex: 1;
    background: #fff;
    position: relative;
    z-index: 2;
    font-size: 14px;
    color: #666;
    padding-bottom: 3px;
}
.summary-head {
    height: 36px;
    display: flex;
    align-items: center;
    padding: 0 17px 0 18px;
    gap: 10px;
    background: #fafafa;
    border-bottom: 1px solid #ddd;
    margin-bottom: 1px;
}
.summary-title {
    flex: 1;
    margin-left: 2px;
    color: #666;
}
.small-btn {
    width: 24px;
    height: 24px;
    color: #333;
}
.small-btn svg {
    width: 14px;
    height: 14px;
    stroke-width: 1.5;
}
.summary-row {
    display: flex;
    height: 22px;
    line-height: 22px;
    padding-left: 10px;
}
.summary-row span {
    width: 185px;
}
.summary-row b {
    font-weight: 700;
    color: #444;
}

/* map */
.main {
    flex: 1;
    display: flex;
    flex-direction: column;
    min-width: 0;
}
.map {
    height: 612px;
    position: relative;
    overflow: hidden;
    background: #e9eaed;
}
.map-canvas {
    width: 100%;
    height: 100%;
    stroke: none;
}
.water {
    fill: #9cc0f9;
}
.creek {
    fill: none;
    stroke: #9cc0f9;
    stroke-width: 4;
}
.creek-thin {
    stroke-width: 3;
}
.border-line {
    fill: none;
    stroke: #6d7784;
    stroke-width: 1;
    stroke-dasharray: 2 2;
}
.blocks path {
    fill: none;
    stroke: #fbefc9;
    stroke-width: 8;
}
.road-big path, .road-mid path, .road-min path {
    fill: none;
    stroke: #fff;
    stroke-linecap: round;
}
.road-big path {
    stroke-width: 4;
}
.road-mid path {
    stroke-width: 2;
}
.road-min path {
    stroke-width: 1;
}
.road-far path {
    stroke-width: 2.600;
}
.hw-edge {
    fill: none;
    stroke: #f0c060;
    stroke-width: 7;
}
.hw {
    fill: none;
    stroke: #fdd98c;
    stroke-width: 5;
}
.shield rect {
    fill: #2a6fc3;
}
.shield text {
    fill: #fff;
    font-size: 10px;
    font-weight: 700;
    text-anchor: middle;
}
.lbl text {
    font-size: 15px;
    fill: #5b7080;
    stroke: #fff;
    stroke-width: 2;
    stroke-opacity: .8;
    paint-order: stroke;
    stroke-linejoin: round;
}
.lbl .end {
    text-anchor: end;
}
.lbl-road text {
    font-size: 12px;
    fill: #666;
}
.lbl-area text {
    font-size: 12px;
    font-weight: 500;
    letter-spacing: 1px;
    fill: #555;
}
.lbl-water text {
    font-size: 13px;
    fill: #3b6fc9;
    stroke: #9cc0f9;
}
.lbl-teal text {
    fill: #129eaf;
}
.lbl-pink text {
    fill: #e91e63;
}
.lbl-blue text {
    fill: #1a73e8;
}
.lbl-red text {
    fill: #d93025;
}
.lbl-indigo text {
    fill: #5767c0;
}
.lbl-green text {
    fill: #1e8e3e;
}
.lbl-orange text {
    fill: #d56e0c;
}
.pins > use {
    stroke: none;
}
.pins > path, .pins > circle, .pins > rect {
    fill: #fff;
}
.pin-letter {
    fill: #fff;
    font-size: 14px;
    font-weight: 700;
    text-anchor: middle;
}
.trip {
    fill: none;
    stroke: #5fb000;
    stroke-width: 5;
    stroke-linejoin: round;
}
.trip-thin {
    fill: none;
    stroke: #5fb000;
    stroke-width: 3;
}
.marker {
    fill: #e74c3c;
    stroke: #fff;
    stroke-opacity: .25;
    stroke-width: 1;
}
.marker-text {
    fill: #fff;
    font-size: 14px;
    font-weight: 700;
    text-anchor: middle;
}
.map-tools {
    position: absolute;
    left: 5px;
    top: 11px;
    display: flex;
    flex-direction: column;
    gap: 5px;
}
.map-btn {
    width: 27px;
    height: 27px;
    background: #fff;
    border-radius: 2px;
    box-shadow: 0 1px 3px rgba(0, 0, 0, .35);
    display: flex;
    align-items: center;
    justify-content: center;
    color: #333;
}
.map-btn svg {
    width: 15px;
    height: 15px;
}
.map-btn-info {
    margin-bottom: 9px;
    font-size: 16px;
}
.ruler {
    fill: #222;
    stroke-width: 1;
}
.ruler-ticks {
    stroke: #fff;
}
.legend {
    position: absolute;
    left: 43px;
    top: 10px;
    width: 791px;
    height: 28px;
    padding-left: 10px;
    background: rgba(255, 255, 255, .95);
    border-radius: 5px;
    box-shadow: 0 1px 3px rgba(0, 0, 0, .25);
    display: flex;
    align-items: center;
    gap: 8.7px;
    font-size: 12px;
    font-weight: 700;
    color: #787d8e;
}
.legend-item {
    display: flex;
    align-items: center;
    gap: 7px;
    white-space: nowrap;
}
.dot {
    width: 10px;
    height: 10px;
    border-radius: 50%;
    flex: none;
}
.dot-run { background: #28a745; }
.dot-stop { background: #f00; }
.dot-idle { background: #ffa500; }
.dot-gps { background: #6f2c91; }
.dot-gprs { background: #1a1f27; }
.dot-hist { background: #a9a9a9; }
.dot-exp { background: #4f1c0c; }
.dot-none { background: #d9d9d9; }

/* device info floating panel */
.info {
    position: absolute;
    right: 10px;
    top: 11px;
    width: 258px;
    height: 471px;
    padding: 0 4px;
    background: rgba(255, 255, 255, .96);
    border-radius: 4px;
    box-shadow: 0 1px 4px rgba(0, 0, 0, .2);
    display: flex;
    flex-direction: column;
    gap: 9px;
}
.info-title {
    height: 39px;
    margin-bottom: -9px;
    padding: 7px 6px 0 16px;
    display: flex;
    align-items: flex-start;
    font-size: 13px;
}
.info-title b {
    flex: 1;
    font-weight: 500;
    color: #333;
    line-height: 18px;
}
.info-gear {
    width: 14px;
    height: 14px;
    margin: 3px 19px 0 0;
    color: #333;
}
.info-close {
    width: 10px;
    height: 12px;
    margin-top: 4px;
    color: #444;
    stroke-width: 1.2;
}
.card {
    border: 1px solid #e0e0e0;
    border-radius: 2px;
    font-size: 12px;
}
.card-head {
    height: 31px;
    padding-left: 5px;
    display: flex;
    align-items: center;
    gap: 6px;
    background: rgba(248, 248, 248, .9);
    border-bottom: 1px solid #e0e0e0;
    font-weight: 500;
    color: #222;
}
.dot-big {
    width: 12px;
    height: 12px;
    margin-right: -1px;
}
.card-body {
    padding: 4px 6px 6px;
}
.card-device {
    padding: 3px 6px 6px;
}
.info-row {
    height: 22px;
    display: flex;
    align-items: center;
    color: #444;
}
.info-row b {
    font-weight: 500;
}
.info-ico {
    width: 16px;
    height: 14px;
    margin-right: 9px;
    flex: none;
    color: #8d8d8d;
    stroke-width: 1.5;
}
.info-faint {
    color: #ccc;
}
.info-solid {
    fill: #8d8d8d;
    stroke: none;
}
.tag {
    margin-top: 1px;
    padding: 0 7px;
    height: 22px;
    line-height: 20px;
    border: 1px solid #ffd591;
    border-radius: 2px;
    background: #fff7e6;
    color: #fa8c16;
    font-weight: 500;
}
.comma {
    margin-top: 6px;
}
.data-row {
    height: 22px;
    line-height: 22px;
    font-weight: 700;
    color: #a3a3a3;
    display: flex;
}
.driver-key {
    width: 119px;
}
.driver-val {
    color: #333;
}

/* data log */
.datalog {
    height: 284px;
    flex: none;
    background: #fff;
    display: flex;
    flex-direction: column;
}
.log-tabs {
    height: 38px;
    padding: 0 10px 0 20px;
    display: flex;
    align-items: stretch;
    gap: 32px;
    border-bottom: 2px solid #e6e6e6;
    color: #444;
    flex: none;
}
.log-tab {
    padding-top: 8px;
    height: 37px;
}
.log-tab-active {
    color: #f7931e;
    border-bottom: 2px solid #f7931e;
}
.log-close {
    margin: 7px 0 0 auto;
    width: 24px;
    height: 24px;
    background: #f7931e;
    border-radius: 2px;
    color: #fff;
    line-height: 24px;
    text-align: center;
}
.table-wrap {
    margin: 2px 8px 0 1px;
    height: 204px;
    flex: none;
    border-bottom: 1px solid #ccc;
    padding-bottom: 3px;
}
.log-table {
    width: 100%;
    table-layout: fixed;
    border-collapse: collapse;
    border: 1px solid #ccc;
    border-bottom: 0;
}
.c-no { width: 92px; }
.c-time { width: 196px; }
.c-speed { width: 145px; }
.c-addr { width: 456px; }
.c-gsm { width: 66px; }
.c-gps { width: 65px; }
.c-power { width: 131px; }
.c-batt { width: 130px; }
.log-table th {
    height: 39px;
    background: #e8e8e8;
    font-weight: 400;
    color: #555;
    border: 1px solid #ccc;
}
.log-table td {
    height: 27px;
    padding: 0 8px;
    color: #444;
    border: 1px solid #ccc;
    white-space: nowrap;
    overflow: hidden;
    text-overflow: ellipsis;
}
.log-table tr:last-child td {
    border-bottom: 0;
}
.log-table .val {
    color: #2a6ebb;
}
.pager {
    height: 40px;
    flex: none;
    display: flex;
    align-items: center;
    padding-left: 40px;
    color: #555;
    border-bottom: 1px solid #ddd;
}
.pager-total {
    width: 74px;
}
.pager-arrow {
    width: 8px;
    height: 14px;
    color: #444;
    stroke-width: 1.2;
}
.pager-off {
    color: #ccc;
    margin-right: 8px;
}
.page {
    width: 24px;
    height: 24px;
    line-height: 24px;
    text-align: center;
    color: #444;
}
.page-on {
    border: 1px solid #f7931e;
    border-radius: 2px;
    line-height: 22px;
}
.page-more {
    color: #bbb;
    font-size: 10px;
    letter-spacing: 1px;
    width: 34px;
}
.page-last {
    width: 34px;
    margin-right: 10px;
}
.page-size {
    margin-left: 16px;
    width: 81px;
    height: 24px;
    padding: 0 7px;
    border: 1px solid #d9d9d9;
    border-radius: 2px;
    display: flex;
    align-items: center;
    justify-content: space-between;
}
.toolbar {
    flex: 1;
    display: flex;
    align-items: center;
    padding: 0 10px;
    gap: 20px;
    color: #444;
}
.tool {
    width: 18px;
    height: 18px;
    flex: none;
}
.tool-gap {
    flex: 1;
}
.tool-heavy {
    stroke-width: 2.200;
}
.tool-fill {
    fill: #444;
}

/* screenshot call-outs laid over the page */
.note {
    position: absolute;
    z-index: 5;
    border: 3px solid #f44a4a;
    pointer-events: none;
}
.note-1 { left: 58px; top: 115px; width: 374px; height: 59px; }
.note-2 { left: 947px; top: 59px; width: 422px; height: 500px; }
.note-3 { left: 56px; top: 318px; width: 376px; height: 69px; }
.note-4 { left: 57px; top: 517px; width: 375px; height: 84px; }
.note-5 { left: 60px; top: 822px; width: 372px; height: 104px; }
.num {
    position: absolute;
    z-index: 6;
    width: 40px;
    height: 40px;
    background: #2121ee;
    border-radius: 2px;
    box-shadow: 2px 3px 5px rgba(0, 0, 0, .4);
    color: #fff;
    font-size: 31px;
    line-height: 40px;
    text-align: center;
}
.num-1 { left: 432px; top: 124px; }
.num-2 { left: 1138px; top: 59px; }
.num-3 { left: 432px; top: 333px; }
.num-4 { left: 431px; top: 540px; }
.num-5 { left: 433px; top: 853px; }
```
